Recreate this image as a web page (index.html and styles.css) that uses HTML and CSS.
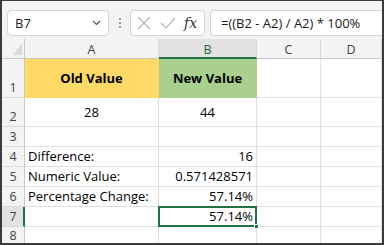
FILE: index.html
```html
<!DOCTYPE html>
<html>
<head>
<meta charset="utf-8">
<link rel="stylesheet" href="styles.css">
</head>
<body>
<div class="frame">
  <div class="fbar">
    <div class="namebox">
      <span class="ref">B7</span>
      <svg class="chev" width="9" height="6" viewBox="0 0 9 6"><path d="M1 1 L4.5 4.5 L8 1" fill="none" stroke="#555" stroke-width="1.2"/></svg>
    </div>
    <div class="dots"><i></i><i></i><i></i></div>
    <div class="fxbox">
      <svg width="14" height="14" viewBox="0 0 14 14"><path d="M1 1 L13 13 M13 1 L1 13" stroke="#b4b4b4" stroke-width="1.2" fill="none"/></svg>
      <svg width="16" height="12" viewBox="0 0 16 12"><path d="M1 6 L6 11 L15 1" stroke="#b4b4b4" stroke-width="1.2" fill="none"/></svg>
      <span class="fx">fx</span>
    </div>
    <div class="formula">=((B2 - A2) / A2) * 100%</div>
  </div>
  <div class="sheet">
    <div class="corner"><span class="tri"></span></div>
    <div class="ch">A</div>
    <div class="ch sel">B</div>
    <div class="ch">C</div>
    <div class="ch">D</div>

    <div class="rh">1</div>
    <div class="c hd yellow">Old Value</div>
    <div class="c hd green">New Value</div>
    <div class="c"></div>
    <div class="c"></div>

    <div class="rh">2</div>
    <div class="c mid">28</div>
    <div class="c mid">44</div>
    <div class="c"></div>
    <div class="c"></div>

    <div class="rh">3</div>
    <div class="c"></div>
    <div class="c"></div>
    <div class="c"></div>
    <div class="c"></div>

    <div class="rh">4</div>
    <div class="c">Difference:</div>
    <div class="c num">16</div>
    <div class="c"></div>
    <div class="c"></div>

    <div class="rh">5</div>
    <div class="c">Numeric Value:</div>
    <div class="c num">0.571428571</div>
    <div class="c"></div>
    <div class="c"></div>

    <div class="rh">6</div>
    <div class="c">Percentage Change:</div>
    <div class="c num">57.14%</div>
    <div class="c"></div>
    <div class="c"></div>

    <div class="rh selrow">7</div>
    <div class="c"></div>
    <div class="c num active">57.14%<span class="handle"></span></div>
    <div class="c"></div>
    <div class="c"></div>

    <div class="rh">8</div>
    <div class="c"></div>
    <div class="c"></div>
    <div class="c"></div>
    <div class="c"></div>
  </div>
</div>
</body>
</html>
```
FILE: styles.css
```css
* { box-sizing: border-box; }
html, body { margin: 0; padding: 0; background: #fff; }
.frame {
  width: 384px;
  height: 245px;
  border-style: solid;
  border-color: #3a3a3a;
  border-width: 1px 2px 2px 2px;
  background: #f3f3f3;
  display: flex;
  flex-direction: column;
  overflow: hidden;
}
.fbar {
  height: 38px;
  display: flex;
  align-items: center;
  padding: 5px 0 0 5px;
  background: #f3f3f3;
  font-family: "Open Sans", "Noto Sans", sans-serif;
  flex: none;
}
.namebox {
  width: 102px;
  height: 26px;
  background: #fff;
  border: 1px solid #d4d4d4;
  border-radius: 4px;
  display: flex;
  align-items: center;
  justify-content: space-between;
  padding: 0 7px 0 7px;
  font-size: 13px;
  color: #222;
}
.chev { margin-top: 1px; }
.dots {
  width: 21px;
  display: flex;
  flex-direction: column;
  align-items: center;
  gap: 2px;
}
.dots i { display: block; width: 2px; height: 2px; background: #9a9a9a; }
.fxbox {
  width: 75px;
  height: 26px;
  background: #fff;
  border: 1px solid #d4d4d4;
  border-radius: 4px;
  display: flex;
  align-items: center;
  padding-left: 6px;
  gap: 9px;
}
.fx {
  font-family: "DejaVu Serif", "Liberation Serif", serif;
  font-style: italic;
  font-size: 14px;
  color: #333;
  margin-left: -1px;
}
.formula {
  margin-left: 5px;
  flex: 1;
  height: 26px;
  background: #fff;
  border: 1px solid #d4d4d4;
  border-right: none;
  border-radius: 4px 0 0 4px;
  display: flex;
  align-items: center;
  padding-left: 10px;
  font-size: 13px;
  color: #1a1a1a;
}
.sheet {
  flex: 1;
  display: grid;
  grid-template-columns: 23px 134px 98px 64px 1fr;
  grid-template-rows: 20px 39px 29px 20px 20px 20px 20px 20px 1fr;
  background: #fff;
  font-family: "Open Sans", "Noto Sans", sans-serif;
}
.corner {
  background: #f3f3f3;
  border-right: 1px solid #c8c8c8;
  border-bottom: 1px solid #c8c8c8;
  position: relative;
}
.tri {
  position: absolute;
  right: 2px;
  bottom: 3px;
  width: 0;
  height: 0;
  border-style: solid;
  border-width: 0 0 12px 9px;
  border-color: transparent transparent #dadada transparent;
}
.ch {
  background: #f3f3f3;
  border-right: 1px solid #d8d8d8;
  border-bottom: 1px solid #c8c8c8;
  display: flex;
  align-items: center;
  justify-content: center;
  font-size: 12.5px;
  color: #444;
  padding-top: 1px;
}
.ch.sel {
  background: #e2e2e2;
  border-bottom: 2px solid #217346;
  color: #1f6b43;
  padding-top: 2px;
}
.rh {
  background: #f3f3f3;
  border-right: 1px solid #c8c8c8;
  border-bottom: 1px solid #dadada;
  display: flex;
  align-items: flex-end;
  justify-content: center;
  font-size: 12.5px;
  color: #444;
  line-height: 18px;
}
.rh.selrow {
  background: #e2e2e2;
  border-right: 2px solid #217346;
  padding-left: 1px;
}
.c {
  border-right: 1px solid #e0e0e0;
  border-bottom: 1px solid #e0e0e0;
  display: flex;
  align-items: flex-end;
  padding: 0 3px 0 3px;
  font-size: 13px;
  color: #000;
  line-height: 19px;
  white-space: nowrap;
}
.hd {
  align-items: center;
  justify-content: center;
  font-weight: bold;
  border-right-color: transparent;
  border-bottom-color: transparent;
}
.yellow { background: #ffd966; }
.green { background: #a9d08e; }
.mid { justify-content: center; align-items: center; }
.num { justify-content: flex-end; }
.active { position: relative; }
.active::after {
  content: "";
  position: absolute;
  left: -1px;
  top: -1px;
  right: -1px;
  bottom: -1px;
  border: 2px solid #217346;
}
.handle {
  position: absolute;
  right: -3px;
  bottom: -3px;
  width: 5px;
  height: 5px;
  background: #217346;
  border: 1px solid #fff;
  z-index: 2;
}
```
